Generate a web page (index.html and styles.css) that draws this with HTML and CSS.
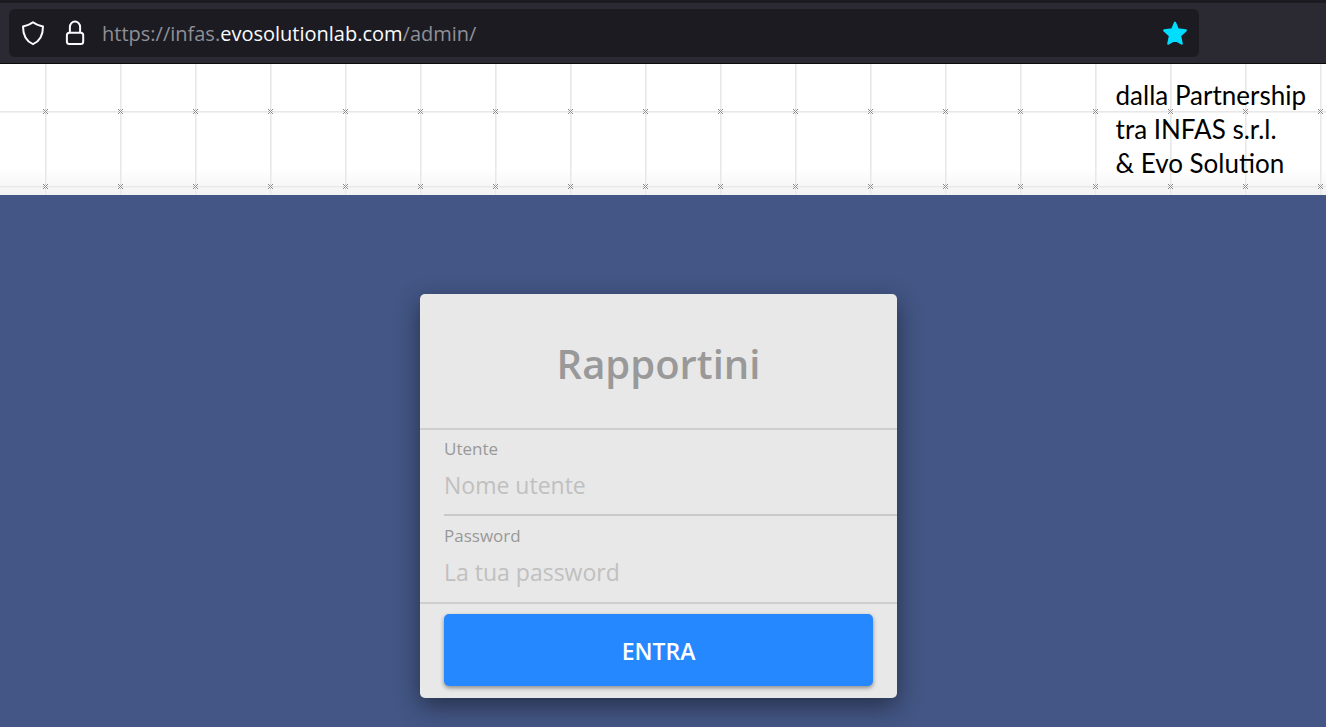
FILE: index.html
```html
<!DOCTYPE html>
<html lang="it">
<head>
<meta charset="utf-8">
<meta name="viewport" content="width=device-width, initial-scale=1">
<title>Rapportini</title>
<link rel="stylesheet" href="styles.css">
</head>
<body>
<div class="toolbar">
  <div class="urlbar">
    <svg class="icon" viewBox="0 0 26 28" aria-hidden="true"><path d="M13 3.200C10.500 5.200 6.800 6.600 3 7.500C3 15 5.500 22 13 25.200C20.500 22 23 15 23 7.500C19.200 6.600 15.500 5.200 13 3.200Z"/></svg>
    <svg class="icon" viewBox="0 0 26 28" aria-hidden="true"><rect x="4.900" y="13.700" width="16.300" height="11.300" rx="2.500"/><path d="M7.900 13.500V8A5.100 5.400 0 0 1 18.100 8V13.500"/></svg>
    <a class="url" href="#">https://infas.<span class="domain">evosolutionlab.com</span>/admin/</a>
    <button class="bookmark" type="button" aria-label="Segnalibro"><svg class="star" viewBox="0 0 24 24" aria-hidden="true"><path d="M12 2.500L14.600 8.700L22 9.600L16.700 14.600L18.200 21.800L12 18.300L5.800 21.800L7.300 14.600L2 9.600L9.400 8.700Z"/></svg></button>
  </div>
</div>
<header class="banner">
  <svg class="grid" aria-hidden="true">
    <defs>
      <pattern id="mesh" x="8" y="10" width="75" height="75" patternUnits="userSpaceOnUse">
        <path fill="#e8e8e8" d="M37 0h1v75h-1zM0 37h75v1H0z"/>
        <path fill="#f1f1f1" d="M38 0h1v75h-1zM0 38h75v1H0z"/>
        <path fill="#fff" d="M35 35h5v5h-5z"/>
        <path fill="#868686" d="M35 35h1v1h-1zM36 36h1v1h-1zM37 37h1v1h-1zM38 38h1v1h-1zM39 39h1v1h-1zM39 35h1v1h-1zM38 36h1v1h-1zM36 38h1v1h-1zM35 39h1v1h-1z"/>
        <path fill="#c0c0c0" d="M37 35h1v1h-1zM35 37h1v1h-1zM39 37h1v1h-1zM37 39h1v1h-1z"/>
      </pattern>
    </defs>
    <rect width="100%" height="100%" fill="url(#mesh)"/>
  </svg>
  <p class="tagline">dalla Partnership<br>tra INFAS s.r.l.<br>&amp; Evo Solution</p>
</header>
<main class="page">
  <form class="card">
    <h1 class="title">Rapportini</h1>
    <div class="fields">
      <div class="field">
        <label class="label" for="user">Utente</label>
        <input class="input" id="user" type="text" placeholder="Nome utente">
      </div>
      <div class="field field-last">
        <label class="label" for="pass">Password</label>
        <input class="input" id="pass" type="password" placeholder="La tua password">
      </div>
    </div>
    <div class="actions"><button class="submit" type="button">ENTRA</button></div>
  </form>
</main>
</body>
</html>
```
FILE: styles.css
```css
* { box-sizing: border-box; }
body {
  margin: 0;
  min-height: 100vh;
  display: flex;
  flex-direction: column;
  background: #435685;
  font-family: "Open Sans", "Noto Sans", sans-serif;
}
.toolbar {
  padding: 6px 127px 6px 9px;
  background: #2b2a33;
  border-top: 3px solid #1c1b22;
  border-bottom: 1px solid #0c0c0d;
}
.urlbar {
  display: flex;
  align-items: center;
  gap: 16px;
  height: 48px;
  padding: 0 11px;
  border-radius: 6px;
  background: #1c1b22;
}
.icon {
  flex: none;
  width: 26px;
  height: 28px;
  fill: none;
  stroke: #fbfbfe;
  stroke-width: 2;
  stroke-linejoin: round;
}
.url {
  flex: 1;
  margin-left: -2px;
  padding-top: 2px;
  font-size: 20px;
  line-height: 28px;
  color: #8f8f96;
  text-decoration: none;
  white-space: nowrap;
}
.domain { color: #fbfbfe; }
.bookmark {
  display: flex;
  padding: 0;
  border: 0;
  background: none;
}
.star {
  width: 26px;
  height: 26px;
  fill: #00ddff;
  stroke: #00ddff;
  stroke-width: 2;
  stroke-linejoin: round;
}
.banner {
  position: relative;
  display: flex;
  justify-content: flex-end;
  padding: 14px 20px 15px;
  background: linear-gradient(#fff 80%, #f2f2f2);
}
.grid {
  position: absolute;
  inset: 0;
  width: 100%;
  height: 100%;
}
.tagline {
  position: relative;
  margin: 0;
  font-family: Lato, "Open Sans", sans-serif;
  font-size: 26px;
  line-height: 34px;
  color: #000;
}
.page {
  flex: 1;
  display: flex;
  justify-content: center;
  align-items: flex-start;
  padding: 99px 9px 29px 0;
}
.card {
  width: 100%;
  max-width: 477px;
  border-radius: 5px;
  background: #e8e8e8;
  box-shadow: 0 8px 24px rgba(0, 0, 0, 0.45);
}
.title {
  margin: 0;
  padding: 40px 24px 34px;
  font-size: 40px;
  line-height: 60px;
  font-weight: 600;
  text-align: center;
  color: #999;
}
.fields {
  padding-left: 24px;
  border-top: 2px solid #cecece;
  border-bottom: 2px solid #cecece;
}
.field {
  display: flex;
  flex-direction: column;
  padding: 6px 0;
  border-bottom: 2px solid #c9c9c9;
}
.field-last { border-bottom: 0; padding: 7px 0; }
.label {
  font-size: 17px;
  line-height: 26px;
  color: #999;
}
.input {
  width: 100%;
  height: 46px;
  padding: 0;
  border: 0;
  outline: 0;
  background: none;
  font-family: inherit;
  font-size: 23px;
  color: #444;
}
.input::placeholder { color: #c0c0c0; opacity: 1; }
.actions { padding: 10px 24px 12px; }
.submit {
  display: block;
  width: 100%;
  height: 72px;
  padding: 1px 0 0;
  border: 0;
  border-radius: 5px;
  background: #2688ff;
  box-shadow: 0 2px 4px rgba(0, 0, 0, 0.4);
  font-family: inherit;
  font-size: 23px;
  font-weight: 600;
  color: #fff;
}
```
